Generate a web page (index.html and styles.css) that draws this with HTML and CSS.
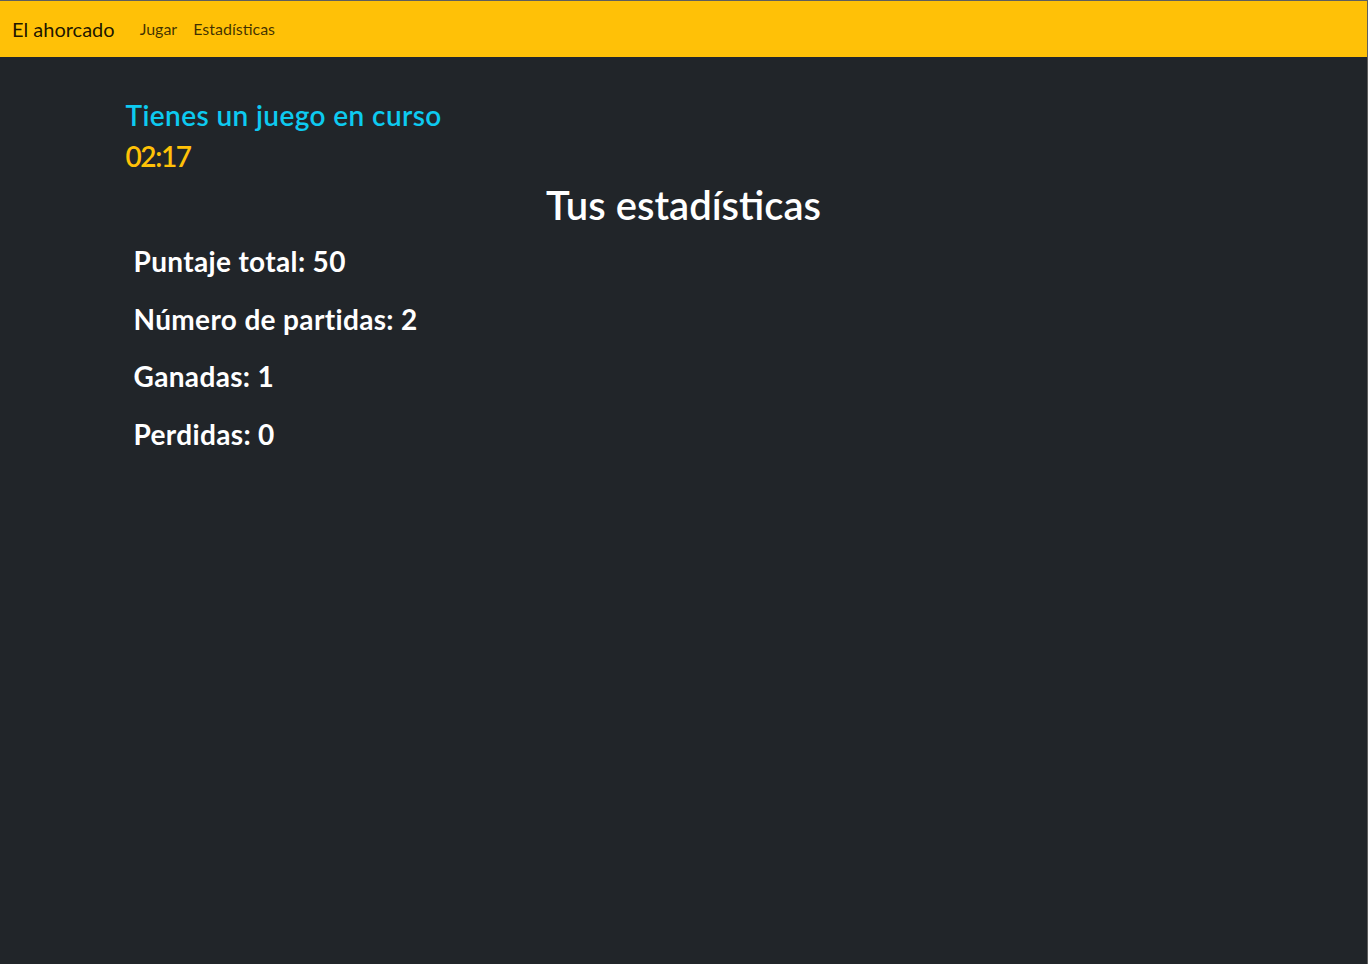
FILE: index.html
```html
<!DOCTYPE html>
<html lang="es">
<head>
<meta charset="utf-8">
<title>El ahorcado</title>
<link rel="stylesheet" href="styles.css">
</head>
<body>
<nav class="navbar">
  <div class="navbar-inner">
    <a class="brand" href="#">El ahorcado</a>
    <ul class="nav-links">
      <li><a class="nav-link" href="#">Jugar</a></li>
      <li><a class="nav-link" href="#">Estadísticas</a></li>
    </ul>
  </div>
</nav>
<main class="container">
  <h3 class="heading in-progress">Tienes un juego en curso</h3>
  <h3 class="heading timer">02:17</h3>
  <h1 class="title">Tus estadísticas</h1>
  <div class="stat"><h3 class="stat-text">Puntaje total: 50</h3></div>
  <div class="stat"><h3 class="stat-text">Número de partidas: 2</h3></div>
  <div class="stat"><h3 class="stat-text">Ganadas: 1</h3></div>
  <div class="stat"><h3 class="stat-text">Perdidas: 0</h3></div>
</main>
</body>
</html>
```
FILE: styles.css
```css
html, body {
  margin: 0;
  padding: 0;
}
body {
  background: #212529;
  color: #ffffff;
  font-family: "Lato", "Open Sans", sans-serif;
  min-height: 964px;
  border-top: 1px solid #5f5f5f;
  border-right: 1px solid #5f5f5f;
  box-sizing: border-box;
}
.navbar {
  background: #ffc107;
  padding: 8px 0;
}
.navbar-inner {
  display: flex;
  align-items: center;
  padding: 0 12px;
}
.brand {
  font-size: 20px;
  line-height: 30px;
  padding: 5px 0;
  margin-right: 17px;
  color: rgba(0, 0, 0, 0.9);
  text-decoration: none;
}
.nav-links {
  display: flex;
  list-style: none;
  margin: 0;
  padding: 0;
}
.nav-link {
  display: block;
  padding: 8px;
  font-size: 16px;
  line-height: 24px;
  color: rgba(0, 0, 0, 0.75);
  text-decoration: none;
}
.container {
  width: 1140px;
  box-sizing: border-box;
  margin: 0 auto;
  padding: 41px 12px 0;
}
.heading {
  font-size: 28px;
  font-weight: 600;
  line-height: 1.2;
  margin: 0 0 8px;
}
.in-progress {
  color: #0dcaf0;
  letter-spacing: 0.4px;
  position: relative;
  top: 1px;
}
.timer {
  color: #ffc107;
  letter-spacing: -1.4px;
}
.title {
  font-size: 40px;
  font-weight: 600;
  line-height: 1.2;
  margin: 0 0 8px;
  text-align: center;
}
.stat {
  padding: 8px;
}
.stat-text {
  font-size: 28px;
  font-weight: 700;
  line-height: 1.2;
  margin: 0 0 8px;
  letter-spacing: 0.35px;
}
```
